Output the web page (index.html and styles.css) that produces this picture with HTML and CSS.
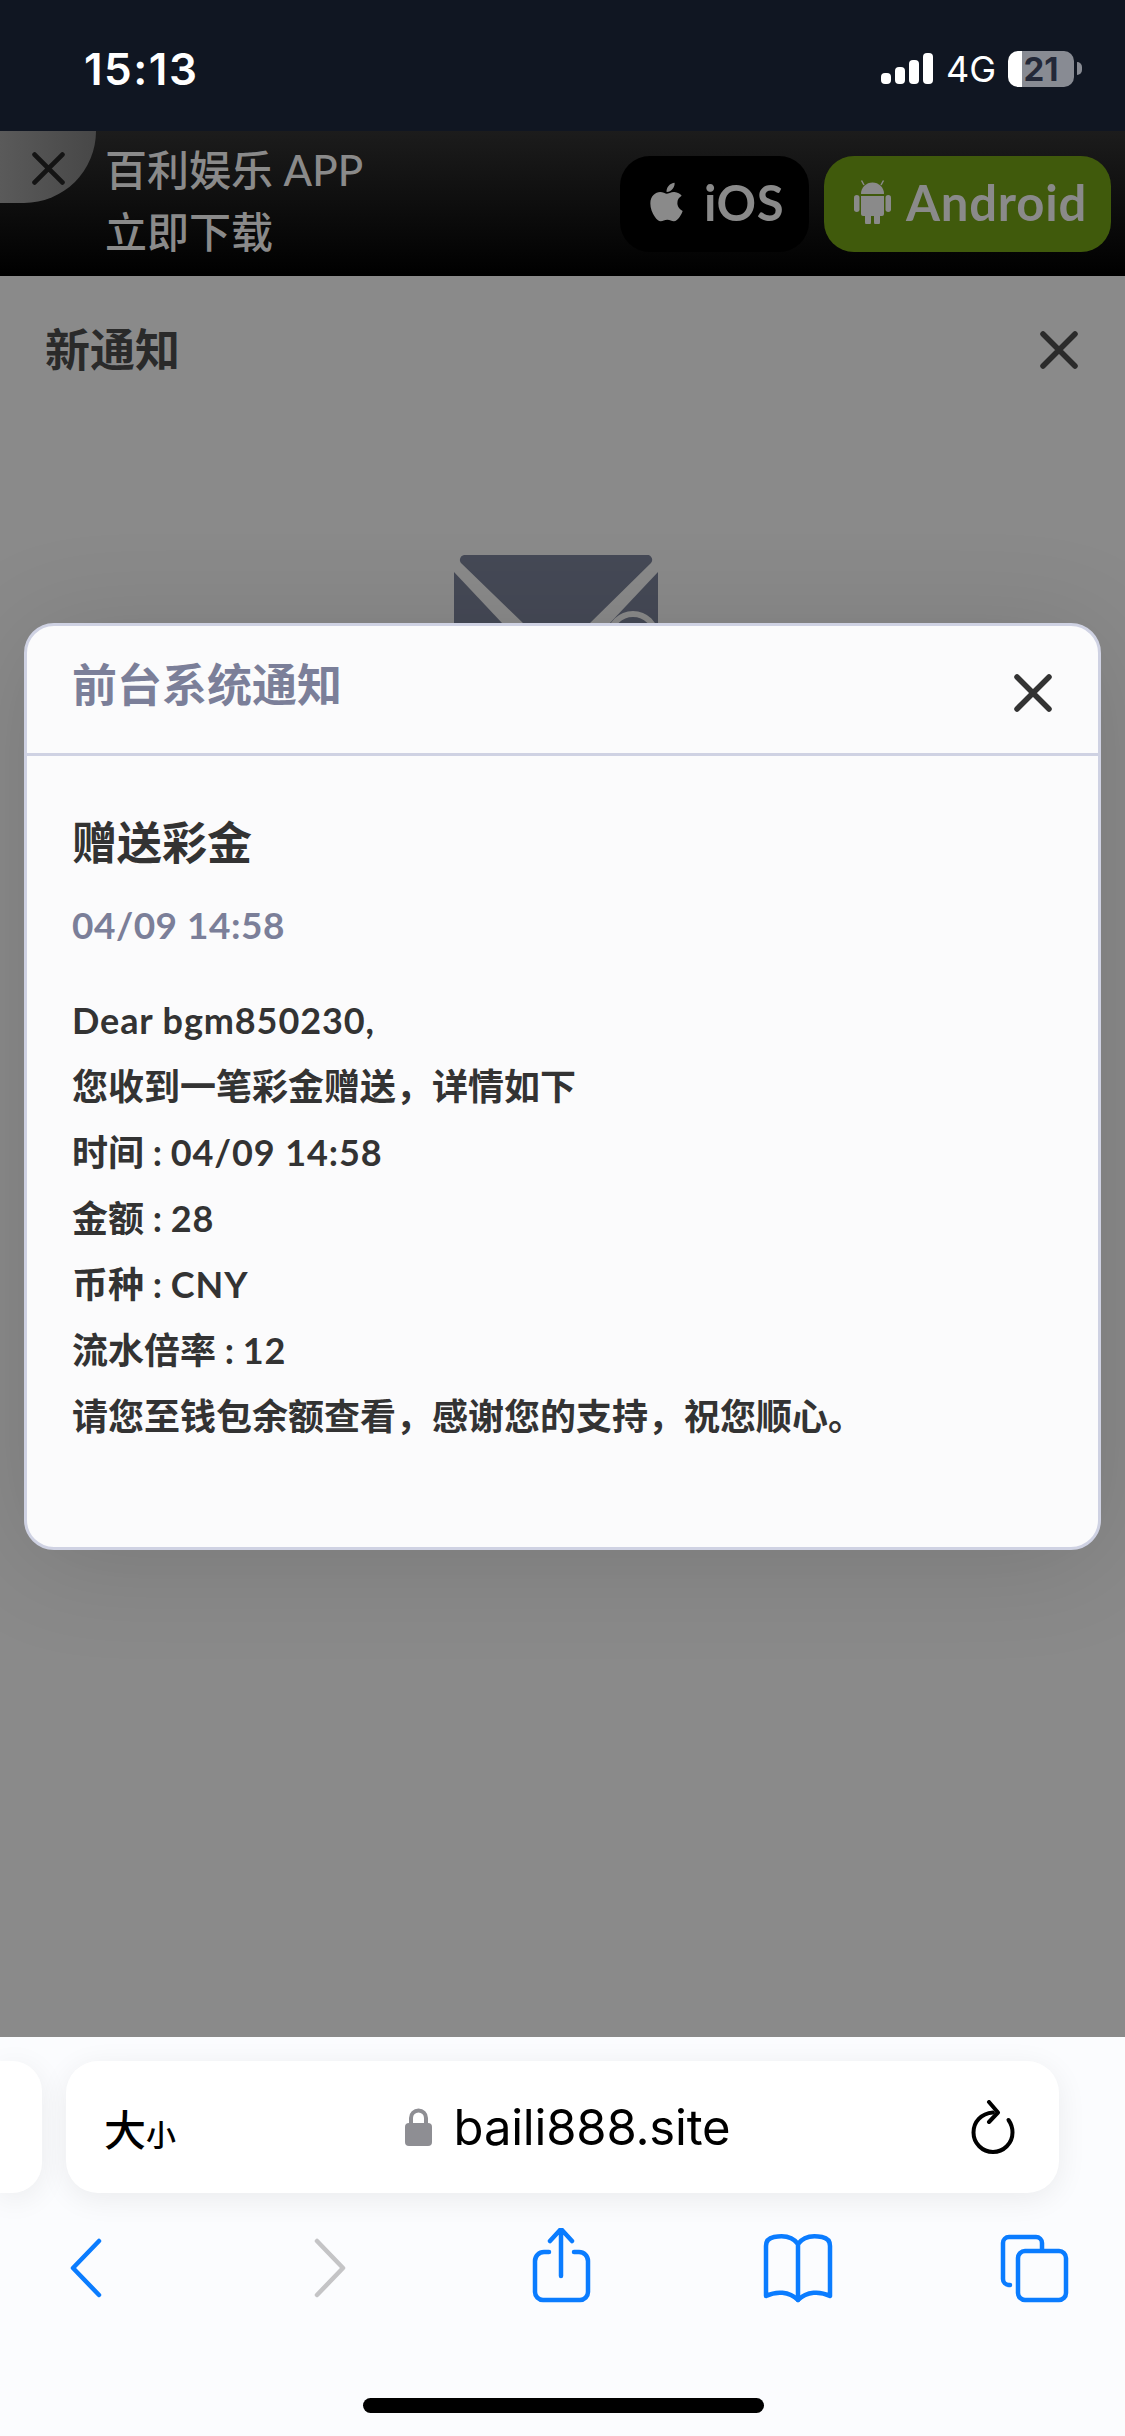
FILE: index.html
```html
<!DOCTYPE html>
<html lang="zh-CN">
<head>
    <meta charset="UTF-8">
    <meta name="viewport" content="width=device-width, initial-scale=1.0">
    <title>新通知</title>
    <link rel="stylesheet" href="styles.css">
</head>
<body>
    <div class="phone">
        <header class="status-bar">
            <span class="status-time">15:13</span>
            <div class="status-right">
                <div class="signal">
                    <i class="bar bar-1"></i><i class="bar bar-2"></i><i class="bar bar-3"></i><i class="bar bar-4"></i>
                </div>
                <span class="network">4G</span>
                <div class="battery"><span class="battery-level">21</span></div>
                <i class="battery-nub"></i>
            </div>
        </header>

        <section class="app-banner">
            <div class="banner-close">
                <svg class="icon-x" viewBox="0 0 38 38"><path d="M3 3 35 35M35 3 3 35"/></svg>
            </div>
            <p class="banner-text">百利娱乐 APP<br>立即下载</p>
            <div class="banner-btn btn-ios">
                <svg class="os-icon" viewBox="0 0 384 512"><path d="M318.7 268.7c-.2-36.7 16.4-64.4 50-84.8-18.8-26.9-47.2-41.7-84.7-44.6-35.5-2.8-74.3 20.7-88.5 20.7-15 0-49.4-19.7-76.4-19.7C63.3 141.2 4 184.8 4 273.5q0 39.3 14.4 81.2c12.8 36.7 59 126.7 107.2 125.2 25.2-.6 43-17.9 75.8-17.9 31.8 0 48.3 17.9 76.4 17.9 48.6-.7 90.4-82.5 102.6-119.3-65.2-30.7-61.7-90-61.7-91.9zm-56.6-164.2c27.3-32.4 24.8-61.9 24-72.5-24.1 1.4-52 16.4-67.9 34.9-17.5 19.8-27.8 44.3-25.6 71.9 26.1 2 49.9-11.4 69.5-34.3z"/></svg>
                <span>iOS</span>
            </div>
            <div class="banner-btn btn-android">
                <svg class="os-icon" viewBox="0 0 37 44">
                    <path d="M7 14a11.500 11.500 0 0 1 23 0z"/>
                    <path d="M10 5 7.500 .5M27 5 29.500 .5" class="antenna"/>
                    <path d="M7 16h23v18a2 2 0 0 1-2 2h-2v6a3 3 0 0 1-6 0v-6h-3v6a3 3 0 0 1-6 0v-6H9a2 2 0 0 1-2-2z"/>
                    <rect x="0" y="15" width="5.500" height="17" rx="2.750"/>
                    <rect x="31.500" y="15" width="5.500" height="17" rx="2.750"/>
                </svg>
                <span>Android</span>
            </div>
        </section>

        <main class="notice-page">
            <div class="notice-head">
                <h2>新通知</h2>
                <svg class="icon-x" viewBox="0 0 38 38"><path d="M3 3 35 35M35 3 3 35"/></svg>
            </div>
            <div class="empty-mail">
                <svg viewBox="0 0 204 100" width="204" height="100">
                    <path class="mail-flap" d="M10 0h182a5 5 0 0 1 5 8L136 68V100H69V68L7 8A5 5 0 0 1 10 0z"/>
                    <path class="mail-side" d="M0 17 48 68V100H0z"/>
                    <path class="mail-side" d="M204 17 156 68V100h48z"/>
                    <circle class="mail-dot" cx="179" cy="82" r="23"/>
                </svg>
            </div>

            <div class="modal-layer">
                <div class="modal">
                    <div class="modal-head">
                        <h3>前台系统通知</h3>
                        <svg class="icon-x" viewBox="0 0 38 38"><path d="M3 3 35 35M35 3 3 35"/></svg>
                    </div>
                    <div class="modal-body">
                        <h4>赠送彩金</h4>
                        <p class="modal-date">04/09 14:58</p>
                        <div class="modal-text">
                            <p><span class="latin">Dear bgm850230,</span></p>
                            <p>您收到一笔彩金赠送，详情如下</p>
                            <p>时间 : <span class="latin">04/09 14:58</span></p>
                            <p>金额 : <span class="latin">28</span></p>
                            <p>币种 : <span class="latin">CNY</span></p>
                            <p>流水倍率 : <span class="latin">12</span></p>
                            <p>请您至钱包余额查看，感谢您的支持，祝您顺心。</p>
                        </div>
                    </div>
                </div>
            </div>
        </main>

        <footer class="safari-bar">
            <div class="url-row">
                <div class="tab-stub"></div>
                <div class="url-pill">
                    <span class="text-size">大<small>小</small></span>
                    <div class="url-center">
                        <svg class="lock" viewBox="0 0 27 38">
                            <path d="M6 17V10a7.500 7.500 0 0 1 15 0v7" class="lock-hoop"/>
                            <rect x="0" y="15" width="27" height="23" rx="4"/>
                        </svg>
                        <span class="url-text">baili888.site</span>
                    </div>
                    <svg class="reload" viewBox="0 0 44 54">
                        <path d="M22 12.500C10 13.500 2.500 22 2.500 32.500a19.500 19.500 0 0 0 39 0c0-5-1.500-9-4-12.500"/>
                        <path d="M18 2 27 12.500 18 22"/>
                    </svg>
                </div>
            </div>
            <nav class="nav-row">
                <svg viewBox="0 0 80 80"><path d="M53 13 27 40 53 67"/></svg>
                <svg class="nav-off" viewBox="0 0 80 80"><path d="M34 13 60 40 34 67"/></svg>
                <svg viewBox="0 0 80 80">
                    <path d="M28 24h-5a9 9 0 0 0-9 9v31a8 8 0 0 0 8 8h37a8 8 0 0 0 8-8V33a9 9 0 0 0-9-9h-5"/>
                    <path d="M40 48V1M29 13 40 1 51 13"/>
                </svg>
                <svg viewBox="0 0 80 80">
                    <path d="M40 16C35 9 26 7 16 9c-5 1-8 4-8 9v50c10-5 23-5 32 4 9-9 22-9 32-4V18c0-5-3-8-8-9-10-2-19 0-24 7z"/>
                    <path d="M40 16V72"/>
                </svg>
                <svg viewBox="0 0 80 80">
                    <path d="M15 57H14a6 6 0 0 1-6-6V15a6 6 0 0 1 6-6h27a6 6 0 0 1 6 6v7"/>
                    <rect x="23" y="23" width="48" height="49" rx="7"/>
                </svg>
            </nav>
            <div class="home-bar"></div>
        </footer>
    </div>
</body>
</html>
```

FILE: styles.css
```css
:root {
    --overlay-gray: #8a8a8a;
    --muted-blue: #7b7f99;
    --text-dark: #333333;
    --ios-blue: #0a7cff;
    --modal-line: #cfd2e3;
}

* {
    margin: 0;
    padding: 0;
    box-sizing: border-box;
}

body {
    width: 1125px;
    height: 2436px;
    overflow: hidden;
    font-family: "Lato", "Noto Sans CJK SC", sans-serif;
}

.phone {
    width: 1125px;
    height: 2436px;
    display: flex;
    flex-direction: column;
    overflow: hidden;
}

/* status bar */
.status-bar {
    height: 131px;
    flex: none;
    background: #101622;
    color: #ffffff;
    font-family: "Inter", sans-serif;
    display: flex;
    align-items: center;
    justify-content: space-between;
    padding: 6px 43px 0 84px;
}

.status-time {
    font-size: 44px;
    font-weight: 600;
    letter-spacing: 1.5px;
}

.status-right {
    display: flex;
    align-items: center;
}

.signal {
    display: flex;
    align-items: flex-end;
    gap: 4px;
    height: 31px;
    margin-right: 13px;
    margin-top: -1px;
}

.bar {
    width: 10px;
    background: #ffffff;
    border-radius: 4px;
}

.bar-1 { height: 11px; }
.bar-2 { height: 17px; }
.bar-3 { height: 24px; }
.bar-4 { height: 31px; }

.network {
    font-size: 36px;
    font-weight: 400;
    margin-right: 12px;
}

.battery {
    width: 66px;
    height: 36px;
    border-radius: 10px;
    background: linear-gradient(90deg, #ffffff 14px, #888b93 14px);
    color: #232838;
    font-size: 33px;
    font-weight: 700;
    line-height: 36px;
    text-align: center;
}

.battery-nub {
    width: 5px;
    height: 13px;
    margin-left: 3px;
    background: #888b93;
    border-radius: 0 6px 6px 0;
}

/* download banner */
.app-banner {
    height: 145px;
    flex: none;
    position: relative;
    display: flex;
    align-items: center;
    padding: 0 15px 0 105px;
    background: linear-gradient(180deg, #1c1c1c, #000000);
}

.banner-close {
    position: absolute;
    left: 0;
    top: 0;
    width: 96px;
    height: 72px;
    padding: 21px 0 0 32px;
    background: linear-gradient(90deg, #5a5a5a, #474747);
    border-bottom-right-radius: 72px 72px;
}

.banner-close .icon-x {
    width: 33px;
    height: 33px;
    display: block;
    stroke: #141414;
}

.banner-text {
    font-size: 42px;
    font-weight: 500;
    line-height: 62px;
    color: #8a8a8a;
    margin-right: auto;
    margin-top: -5px;
}

.banner-btn {
    height: 96px;
    border-radius: 30px;
    display: flex;
    align-items: center;
    color: #8a8a8a;
    font-size: 49px;
    font-weight: 700;
    padding-bottom: 3px;
}

.btn-ios {
    width: 189px;
    background: #000000;
    padding-left: 28px;
    gap: 19px;
}

.btn-ios span {
    letter-spacing: 0.5px;
}

.btn-android {
    width: 287px;
    background: #405a0c;
    margin-left: 15px;
    margin-right: -1px;
    padding-left: 30px;
    gap: 15px;
}

.btn-android span {
    letter-spacing: 0.8px;
}

.os-icon {
    width: 37px;
    height: 44px;
    fill: #8a8a8a;
    flex: none;
}

.antenna {
    fill: none;
    stroke: #8a8a8a;
    stroke-width: 1.5;
}

/* notification page behind the modal */
.notice-page {
    flex: 1;
    position: relative;
    background: var(--overlay-gray);
}

.notice-head {
    height: 148px;
    display: flex;
    align-items: center;
    justify-content: space-between;
    padding: 0 47px 0 45px;
}

.notice-head h2 {
    font-size: 45px;
    font-weight: 700;
    color: #2a2a2a;
    margin-top: -5px;
}

.icon-x {
    width: 38px;
    height: 38px;
    fill: none;
    stroke: #2b2b2b;
    stroke-width: 5.5;
    stroke-linecap: round;
    flex: none;
}

.empty-mail {
    margin-top: 131px;
    padding-right: 14px;
    display: flex;
    justify-content: center;
}

.mail-flap, .mail-side {
    fill: #454956;
}

.mail-dot {
    fill: #454956;
    stroke: var(--overlay-gray);
    stroke-width: 6;
}

/* modal */
.modal-layer {
    position: absolute;
    inset: 0;
    padding: 347px 24px 0;
}

.modal {
    height: 927px;
    background: #fbfbfc;
    border: 3px solid var(--modal-line);
    border-radius: 30px;
    box-shadow: 0 10px 110px rgba(0, 0, 0, 0.13);
}

.modal-head {
    height: 130px;
    border-bottom: 3px solid var(--modal-line);
    display: flex;
    justify-content: space-between;
    padding: 34px 46px 0 45px;
}

.modal-head h3 {
    font-size: 45px;
    font-weight: 700;
    line-height: 50px;
    color: var(--muted-blue);
}

.modal-head .icon-x {
    margin-top: 14px;
    stroke: #333333;
}

.modal-body {
    padding: 57px 45px 0;
}

.modal-body h4 {
    font-size: 45px;
    font-weight: 700;
    line-height: 60px;
    color: var(--text-dark);
}

.modal-date {
    margin-top: 30px;
    font-size: 37px;
    font-weight: 700;
    line-height: 44px;
    letter-spacing: 0.5px;
    color: var(--muted-blue);
}

.modal-text {
    margin-top: 40px;
}

.modal-text p {
    font-size: 36px;
    font-weight: 700;
    line-height: 66px;
    color: var(--text-dark);
}

.latin {
    letter-spacing: 0.9px;
}

/* safari toolbar */
.safari-bar {
    height: 399px;
    flex: none;
    background: #fbfcfe;
    padding-top: 24px;
    display: flex;
    flex-direction: column;
}

.url-row {
    display: flex;
    gap: 24px;
    height: 132px;
}

.tab-stub {
    width: 42px;
    background: #ffffff;
    border-radius: 0 30px 30px 0;
    box-shadow: 0 6px 30px rgba(0, 0, 0, 0.07);
}

.url-pill {
    width: 993px;
    background: #ffffff;
    border-radius: 32px;
    box-shadow: 0 6px 30px rgba(0, 0, 0, 0.07);
    display: flex;
    align-items: center;
    justify-content: space-between;
    padding: 0 44px 0 38px;
    color: #000000;
}

.text-size {
    font-family: "Noto Sans CJK SC", sans-serif;
    font-size: 42px;
    font-weight: 500;
    width: 74px;
    white-space: nowrap;
}

.text-size small {
    font-size: 30px;
}

.url-center {
    display: flex;
    align-items: center;
    gap: 22px;
    margin-right: 14px;
}

.lock {
    width: 27px;
    height: 38px;
    fill: #8e8e93;
}

.lock-hoop {
    fill: none;
    stroke: #8e8e93;
    stroke-width: 4;
}

.url-text {
    font-family: "Inter", sans-serif;
    font-size: 49px;
    letter-spacing: -0.2px;
}

.reload {
    width: 44px;
    height: 54px;
    fill: none;
    stroke: #000000;
    stroke-width: 4;
    stroke-linecap: round;
    stroke-linejoin: round;
}

.nav-row {
    display: flex;
    justify-content: space-between;
    padding: 0 50px 0 46px;
    margin-top: 35px;
}

.nav-row svg {
    width: 80px;
    height: 80px;
    fill: none;
    stroke: var(--ios-blue);
    stroke-width: 4.5;
    stroke-linecap: round;
    stroke-linejoin: round;
}

.nav-row .nav-off {
    stroke: #c4c4c6;
}

.home-bar {
    width: 401px;
    height: 15px;
    background: #000000;
    border-radius: 8px;
    margin: 90px auto 0 363px;
}
```
